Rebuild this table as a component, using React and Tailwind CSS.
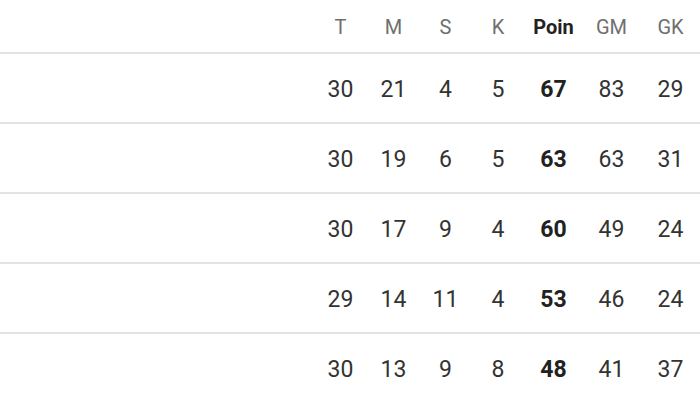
const columns = [
  { key: "t", label: "T", width: "w-[53px]" },
  { key: "m", label: "M", width: "w-[53px]" },
  { key: "s", label: "S", width: "w-[51px]" },
  { key: "k", label: "K", width: "w-[54px]" },
  { key: "p", label: "Poin", width: "w-[57px]", bold: true },
  { key: "gm", label: "GM", width: "w-[59px]" },
  { key: "gk", label: "GK", width: "w-[59px]" },
];

const rows = [
  { t: 30, m: 21, s: 4, k: 5, p: 67, gm: 83, gk: 29 },
  { t: 30, m: 19, s: 6, k: 5, p: 63, gm: 63, gk: 31 },
  { t: 30, m: 17, s: 9, k: 4, p: 60, gm: 49, gk: 24 },
  { t: 29, m: 14, s: 11, k: 4, p: 53, gm: 46, gk: 24 },
  { t: 30, m: 13, s: 9, k: 8, p: 48, gm: 41, gk: 37 },
];

export default function App() {
  return (
    <div className="w-[700px] h-[400px] overflow-hidden bg-white font-['Roboto',sans-serif]">
      {/* Header */}
      <div className="flex h-[54px] border-b-2 border-[#e3e3e3]">
        <div className="flex-1" />
        {columns.map((c) => (
          <div
            key={c.key}
            className={`${c.width} flex items-center justify-center pt-[2px] text-[20px] ${
              c.bold ? "font-bold text-[#222222]" : "text-[#6f6f6f]"
            }`}
          >
            {c.label}
          </div>
        ))}
      </div>

      {/* Rows */}
      {rows.map((r, i) => (
        <div key={i} className="flex h-[70px] border-b-2 border-[#e3e3e3]">
          <div className="flex-1" />
          {columns.map((c) => (
            <div
              key={c.key}
              className={`${c.width} flex items-center justify-center pt-[4px] text-[23px] ${
                c.bold ? "font-bold text-[#222222]" : "text-[#333333]"
              }`}
            >
              {r[c.key]}
            </div>
          ))}
        </div>
      ))}
    </div>
  );
}
